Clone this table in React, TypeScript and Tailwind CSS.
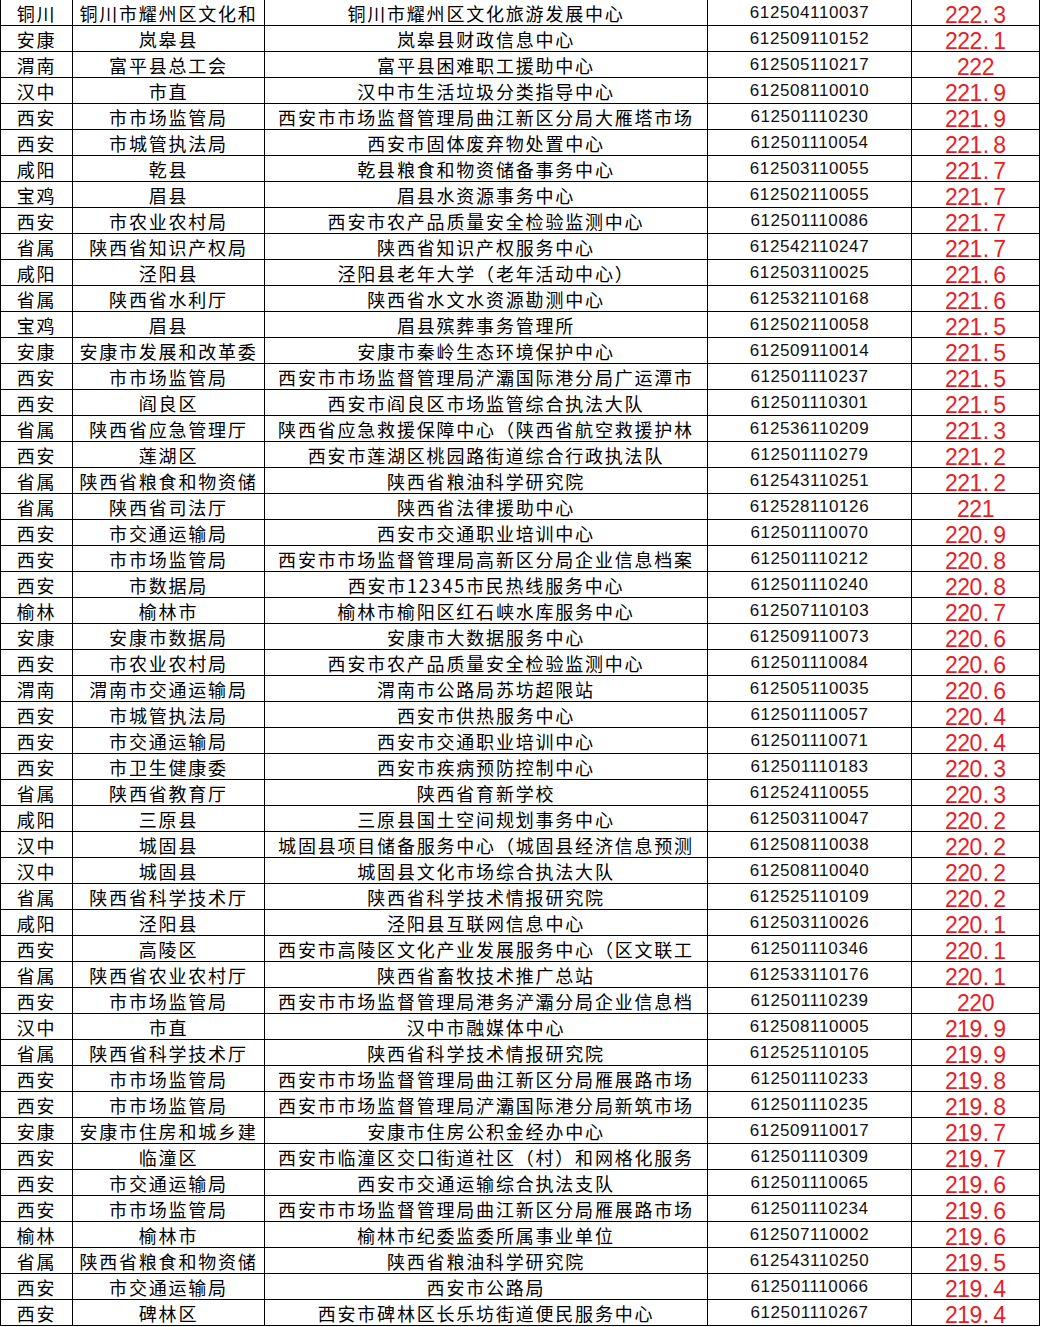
type Row = [string, string, string, string, string]

const rows: Row[] = [
  ['铜川', '铜川市耀州区文化和', '铜川市耀州区文化旅游发展中心', '612504110037', '222.3'],
  ['安康', '岚皋县', '岚皋县财政信息中心', '612509110152', '222.1'],
  ['渭南', '富平县总工会', '富平县困难职工援助中心', '612505110217', '222'],
  ['汉中', '市直', '汉中市生活垃圾分类指导中心', '612508110010', '221.9'],
  ['西安', '市市场监管局', '西安市市场监督管理局曲江新区分局大雁塔市场', '612501110230', '221.9'],
  ['西安', '市城管执法局', '西安市固体废弃物处置中心', '612501110054', '221.8'],
  ['咸阳', '乾县', '乾县粮食和物资储备事务中心', '612503110055', '221.7'],
  ['宝鸡', '眉县', '眉县水资源事务中心', '612502110055', '221.7'],
  ['西安', '市农业农村局', '西安市农产品质量安全检验监测中心', '612501110086', '221.7'],
  ['省属', '陕西省知识产权局', '陕西省知识产权服务中心', '612542110247', '221.7'],
  ['咸阳', '泾阳县', '泾阳县老年大学（老年活动中心）', '612503110025', '221.6'],
  ['省属', '陕西省水利厅', '陕西省水文水资源勘测中心', '612532110168', '221.6'],
  ['宝鸡', '眉县', '眉县殡葬事务管理所', '612502110058', '221.5'],
  ['安康', '安康市发展和改革委', '安康市秦岭生态环境保护中心', '612509110014', '221.5'],
  ['西安', '市市场监管局', '西安市市场监督管理局浐灞国际港分局广运潭市', '612501110237', '221.5'],
  ['西安', '阎良区', '西安市阎良区市场监管综合执法大队', '612501110301', '221.5'],
  ['省属', '陕西省应急管理厅', '陕西省应急救援保障中心（陕西省航空救援护林', '612536110209', '221.3'],
  ['西安', '莲湖区', '西安市莲湖区桃园路街道综合行政执法队', '612501110279', '221.2'],
  ['省属', '陕西省粮食和物资储', '陕西省粮油科学研究院', '612543110251', '221.2'],
  ['省属', '陕西省司法厅', '陕西省法律援助中心', '612528110126', '221'],
  ['西安', '市交通运输局', '西安市交通职业培训中心', '612501110070', '220.9'],
  ['西安', '市市场监管局', '西安市市场监督管理局高新区分局企业信息档案', '612501110212', '220.8'],
  ['西安', '市数据局', '西安市12345市民热线服务中心', '612501110240', '220.8'],
  ['榆林', '榆林市', '榆林市榆阳区红石峡水库服务中心', '612507110103', '220.7'],
  ['安康', '安康市数据局', '安康市大数据服务中心', '612509110073', '220.6'],
  ['西安', '市农业农村局', '西安市农产品质量安全检验监测中心', '612501110084', '220.6'],
  ['渭南', '渭南市交通运输局', '渭南市公路局苏坊超限站', '612505110035', '220.6'],
  ['西安', '市城管执法局', '西安市供热服务中心', '612501110057', '220.4'],
  ['西安', '市交通运输局', '西安市交通职业培训中心', '612501110071', '220.4'],
  ['西安', '市卫生健康委', '西安市疾病预防控制中心', '612501110183', '220.3'],
  ['省属', '陕西省教育厅', '陕西省育新学校', '612524110055', '220.3'],
  ['咸阳', '三原县', '三原县国土空间规划事务中心', '612503110047', '220.2'],
  ['汉中', '城固县', '城固县项目储备服务中心（城固县经济信息预测', '612508110038', '220.2'],
  ['汉中', '城固县', '城固县文化市场综合执法大队', '612508110040', '220.2'],
  ['省属', '陕西省科学技术厅', '陕西省科学技术情报研究院', '612525110109', '220.2'],
  ['咸阳', '泾阳县', '泾阳县互联网信息中心', '612503110026', '220.1'],
  ['西安', '高陵区', '西安市高陵区文化产业发展服务中心（区文联工', '612501110346', '220.1'],
  ['省属', '陕西省农业农村厅', '陕西省畜牧技术推广总站', '612533110176', '220.1'],
  ['西安', '市市场监管局', '西安市市场监督管理局港务浐灞分局企业信息档', '612501110239', '220'],
  ['汉中', '市直', '汉中市融媒体中心', '612508110005', '219.9'],
  ['省属', '陕西省科学技术厅', '陕西省科学技术情报研究院', '612525110105', '219.9'],
  ['西安', '市市场监管局', '西安市市场监督管理局曲江新区分局雁展路市场', '612501110233', '219.8'],
  ['西安', '市市场监管局', '西安市市场监督管理局浐灞国际港分局新筑市场', '612501110235', '219.8'],
  ['安康', '安康市住房和城乡建', '安康市住房公积金经办中心', '612509110017', '219.7'],
  ['西安', '临潼区', '西安市临潼区交口街道社区（村）和网格化服务', '612501110309', '219.7'],
  ['西安', '市交通运输局', '西安市交通运输综合执法支队', '612501110065', '219.6'],
  ['西安', '市市场监管局', '西安市市场监督管理局曲江新区分局雁展路市场', '612501110234', '219.6'],
  ['榆林', '榆林市', '榆林市纪委监委所属事业单位', '612507110002', '219.6'],
  ['省属', '陕西省粮食和物资储', '陕西省粮油科学研究院', '612543110250', '219.5'],
  ['西安', '市交通运输局', '西安市公路局', '612501110066', '219.4'],
  ['西安', '碑林区', '西安市碑林区长乐坊街道便民服务中心', '612501110267', '219.4']
]

const cjk =
  "overflow-hidden whitespace-nowrap border-r border-black text-center pt-[2px] text-[18px] leading-[23px] tracking-[1.8px] text-black font-['Noto_Sans_CJK_SC',sans-serif]"

function Score({ value }: { value: string }) {
  const [whole, frac] = value.split('.')
  return (
    <div className="whitespace-nowrap pt-[4px] text-center text-[23px] leading-[22px] text-[#ec1c24] font-['Liberation_Sans',Arial,sans-serif]">
      <span className="tracking-[-0.5px]">{whole}</span>
      {frac !== undefined && (
        <>
          <span className="ml-[1px] mr-[4px]">.</span>
          <span>{frac}</span>
        </>
      )}
    </div>
  )
}

export default function App() {
  return (
    <div className="h-[1327px] w-[1040px] overflow-hidden bg-white">
      <div className="border-l border-r border-black">
        {rows.map((row, i) => (
          <div
            className="grid h-[26px] grid-cols-[72px_192px_443px_204px_127px] border-b border-black"
            key={i}
          >
            <div className={cjk}>{row[0]}</div>
            <div className={cjk}>{row[1]}</div>
            <div className={cjk}>{row[2]}</div>
            <div className="overflow-hidden whitespace-nowrap border-r border-black pt-[1px] text-center text-[17px] leading-[24px] tracking-[0.6px] text-[#111] font-['Liberation_Sans',Arial,sans-serif]">
              {row[3]}
            </div>
            <Score value={row[4]} />
          </div>
        ))}
      </div>
    </div>
  )
}
